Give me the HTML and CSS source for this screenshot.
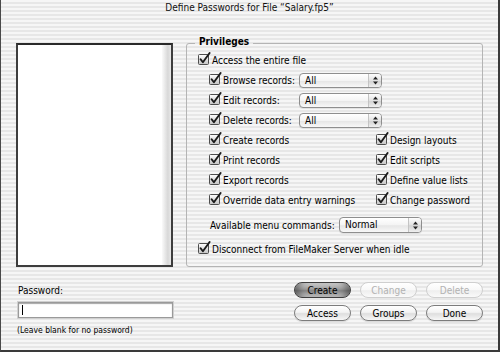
FILE: index.html
```html
<!DOCTYPE html>
<html lang="en">
<head>
    <meta charset="UTF-8">
    <title>Define Passwords</title>
    <link rel="stylesheet" href="styles.css">
</head>
<body>
    <svg class="defs" aria-hidden="true">
        <defs>
            <linearGradient id="cbFill" x1="0" y1="0" x2="0" y2="1">
                <stop offset="0" stop-color="#ffffff"/>
                <stop offset="1" stop-color="#c4c4c4"/>
            </linearGradient>
            <symbol id="cb" viewBox="0 0 13 13">
                <rect x="0.5" y="2.5" width="10" height="10" rx="1" fill="url(#cbFill)" stroke="#4d4d4d"/>
                <path d="M2.6 7.2 L4.9 10.3 L11.6 1" fill="none" stroke="#1a1a1a" stroke-width="1.9" stroke-linecap="round" stroke-linejoin="round"/>
            </symbol>
            <symbol id="arrows" viewBox="0 0 5 9">
                <path d="M0 3.6 L2.5 0.6 L5 3.6 Z M0 5.4 L2.5 8.4 L5 5.4 Z" fill="#222"/>
            </symbol>
        </defs>
    </svg>

    <div class="window">
        <div class="titlebar">Define Passwords for File “Salary.fp5”</div>

        <div class="content">
            <div class="list">
                <div class="list-track"></div>
            </div>

            <fieldset class="group">
                <legend>Privileges</legend>

                <div class="row">
                    <span class="check"><svg class="cb"><use href="#cb"/></svg>Access the entire file</span>
                </div>

                <div class="indent">
                    <div class="row">
                        <span class="check fixed"><svg class="cb"><use href="#cb"/></svg>Browse records:</span>
                        <div class="popup"><span class="popup-value">All</span><span class="popup-arrows"><svg class="arr"><use href="#arrows"/></svg></span></div>
                    </div>
                    <div class="row">
                        <span class="check fixed"><svg class="cb"><use href="#cb"/></svg>Edit records:</span>
                        <div class="popup"><span class="popup-value">All</span><span class="popup-arrows"><svg class="arr"><use href="#arrows"/></svg></span></div>
                    </div>
                    <div class="row">
                        <span class="check fixed"><svg class="cb"><use href="#cb"/></svg>Delete records:</span>
                        <div class="popup"><span class="popup-value">All</span><span class="popup-arrows"><svg class="arr"><use href="#arrows"/></svg></span></div>
                    </div>

                    <div class="checks">
                        <div class="row"><span class="check"><svg class="cb"><use href="#cb"/></svg>Create records</span></div>
                        <div class="row"><span class="check"><svg class="cb"><use href="#cb"/></svg>Design layouts</span></div>
                        <div class="row"><span class="check"><svg class="cb"><use href="#cb"/></svg>Print records</span></div>
                        <div class="row"><span class="check"><svg class="cb"><use href="#cb"/></svg>Edit scripts</span></div>
                        <div class="row"><span class="check"><svg class="cb"><use href="#cb"/></svg>Export records</span></div>
                        <div class="row"><span class="check"><svg class="cb"><use href="#cb"/></svg>Define value lists</span></div>
                        <div class="row"><span class="check"><svg class="cb"><use href="#cb"/></svg>Override data entry warnings</span></div>
                        <div class="row"><span class="check"><svg class="cb"><use href="#cb"/></svg>Change password</span></div>
                    </div>

                    <div class="row menu-row">
                        <span class="menu-label">Available menu commands:</span>
                        <div class="popup wide"><span class="popup-value">Normal</span><span class="popup-arrows"><svg class="arr"><use href="#arrows"/></svg></span></div>
                    </div>
                </div>

                <div class="row disconnect">
                    <span class="check"><svg class="cb"><use href="#cb"/></svg>Disconnect from FileMaker Server when idle</span>
                </div>
            </fieldset>

            <div class="password">
                <div class="password-label">Password:</div>
                <div class="textbox"><span class="caret"></span></div>
                <div class="hint">(Leave blank for no password)</div>
            </div>

            <div class="buttons">
                <button class="btn default">Create</button>
                <button class="btn disabled">Change</button>
                <button class="btn disabled">Delete</button>
                <button class="btn">Access</button>
                <button class="btn">Groups</button>
                <button class="btn">Done</button>
            </div>
        </div>
    </div>
</body>
</html>
```

FILE: styles.css
```css
html, body {
    margin: 0;
    padding: 0;
}
body {
    width: 500px;
    height: 352px;
    font-family: "DejaVu Sans Condensed", "Liberation Sans", sans-serif;
    font-size: 10px;
    color: #000;
    background: #fff;
}
.defs {
    display: block;
    width: 0;
    height: 0;
    overflow: hidden;
}
.window {
    box-sizing: border-box;
    width: 500px;
    height: 352px;
    border-left: 1px solid #4a4a4a;
    border-right: 2px solid #3a3a3a;
    border-bottom: 2px solid #3a3a3a;
    background: repeating-linear-gradient(to bottom, #f6f6f6 0, #f6f6f6 2px, #e7e7e7 2px, #e7e7e7 4px);
}
.titlebar {
    height: 16px;
    line-height: 16px;
    text-align: center;
    font-size: 10px;
    color: #111;
}
.content {
    display: grid;
    grid-template-columns: 157px 297px;
    column-gap: 13px;
    padding: 27px 15px 0 15px;
}

/* user list */
.list {
    box-sizing: border-box;
    height: 224px;
    border: 2px solid #3d3d3d;
    border-top-color: #2a2a2a;
    background: #fff;
    display: flex;
    justify-content: flex-end;
}
.list-track {
    width: 9px;
    background: linear-gradient(to right, #fafafa, #d8d8d8 65%, #e8e8e8);
}

/* privileges group */
.group {
    margin: -7px 0 0 0;
    padding: 0 10px 7px 11px;
    min-width: 0;
    border: 1px solid #b4b4b4;
    border-radius: 3px;
}
.group legend {
    margin-left: -3px;
    padding: 0 4px 3px 4px;
    line-height: 11px;
    font-weight: bold;
}
.row {
    display: flex;
    align-items: center;
    height: 20px;
}
.check {
    display: flex;
    align-items: center;
    white-space: nowrap;
}
.check.fixed {
    width: 90px;
}
.cb {
    width: 13px;
    height: 13px;
    margin: -3px 1px 0 0;
    flex: none;
}
.indent {
    padding-left: 11px;
}
.checks {
    display: grid;
    grid-template-columns: 167px auto;
}
.menu-row {
    margin-top: 5px;
}
.menu-label {
    margin-left: 1px;
    width: 129px;
}
.disconnect {
    margin-top: 4px;
}

/* popup menus */
.popup {
    box-sizing: border-box;
    display: flex;
    width: 83px;
    height: 15px;
    border: 1px solid #8e8e8e;
    border-radius: 4px;
    background: linear-gradient(to bottom, #ffffff, #f4f4f4 50%, #e6e6e6 55%, #f8f8f8);
    box-shadow: 0 1px 0 rgba(0, 0, 0, 0.08);
}
.popup.wide {
    height: 16px;
}
.popup-value {
    flex: 1;
    padding-left: 5px;
    line-height: 13px;
}
.popup-arrows {
    width: 12px;
    display: flex;
    align-items: center;
    justify-content: center;
    border-left: 1px solid #c4c4c4;
    border-radius: 0 3px 3px 0;
    background: linear-gradient(to bottom, #fdfdfd, #e2e2e2 50%, #d2d2d2 55%, #efefef);
}
.arr {
    width: 5px;
    height: 9px;
}

/* password */
.password-label {
    margin-top: 18px;
    margin-left: 2px;
    line-height: 12px;
}
.textbox {
    box-sizing: border-box;
    height: 16px;
    margin-top: 5px;
    margin-left: 2px;
    border: 1px solid #9a9a9a;
    box-shadow: inset 0 1px 1px rgba(0, 0, 0, 0.35), 0 0 0 1px #d0d0d0;
    background: #fff;
    padding: 2px 0 0 3px;
}
.caret {
    display: block;
    width: 1px;
    height: 10px;
    background: #000;
}
.hint {
    margin-top: 7px;
    margin-left: 1px;
    font-size: 8.5px;
    line-height: 10px;
}

/* buttons */
.buttons {
    display: grid;
    grid-template-columns: repeat(3, 57px);
    column-gap: 9px;
    row-gap: 7px;
    justify-content: end;
    align-content: start;
    margin-top: 15px;
}
.btn {
    box-sizing: border-box;
    height: 16px;
    padding: 0;
    font-family: inherit;
    font-size: 10px;
    color: #000;
    border: 1px solid #7c7c7c;
    border-radius: 8px;
    background: linear-gradient(to bottom, #ffffff, #f3f3f3 45%, #dedede 55%, #f7f7f7);
    box-shadow: 0 1px 1px rgba(0, 0, 0, 0.12);
}
.btn.default {
    border-color: #3e3e3e;
    background: linear-gradient(to bottom, #d2d2d2, #9a9a9a 45%, #858585 55%, #c4c4c4);
    box-shadow: inset 8px 0 6px -4px rgba(0, 0, 0, 0.35), inset -8px 0 6px -4px rgba(0, 0, 0, 0.35);
}
.btn.disabled {
    color: #b2b2b2;
    border-color: #cfcfcf;
    background: linear-gradient(to bottom, #ffffff, #f8f8f8 50%, #eeeeee 55%, #fafafa);
    box-shadow: none;
}
```
